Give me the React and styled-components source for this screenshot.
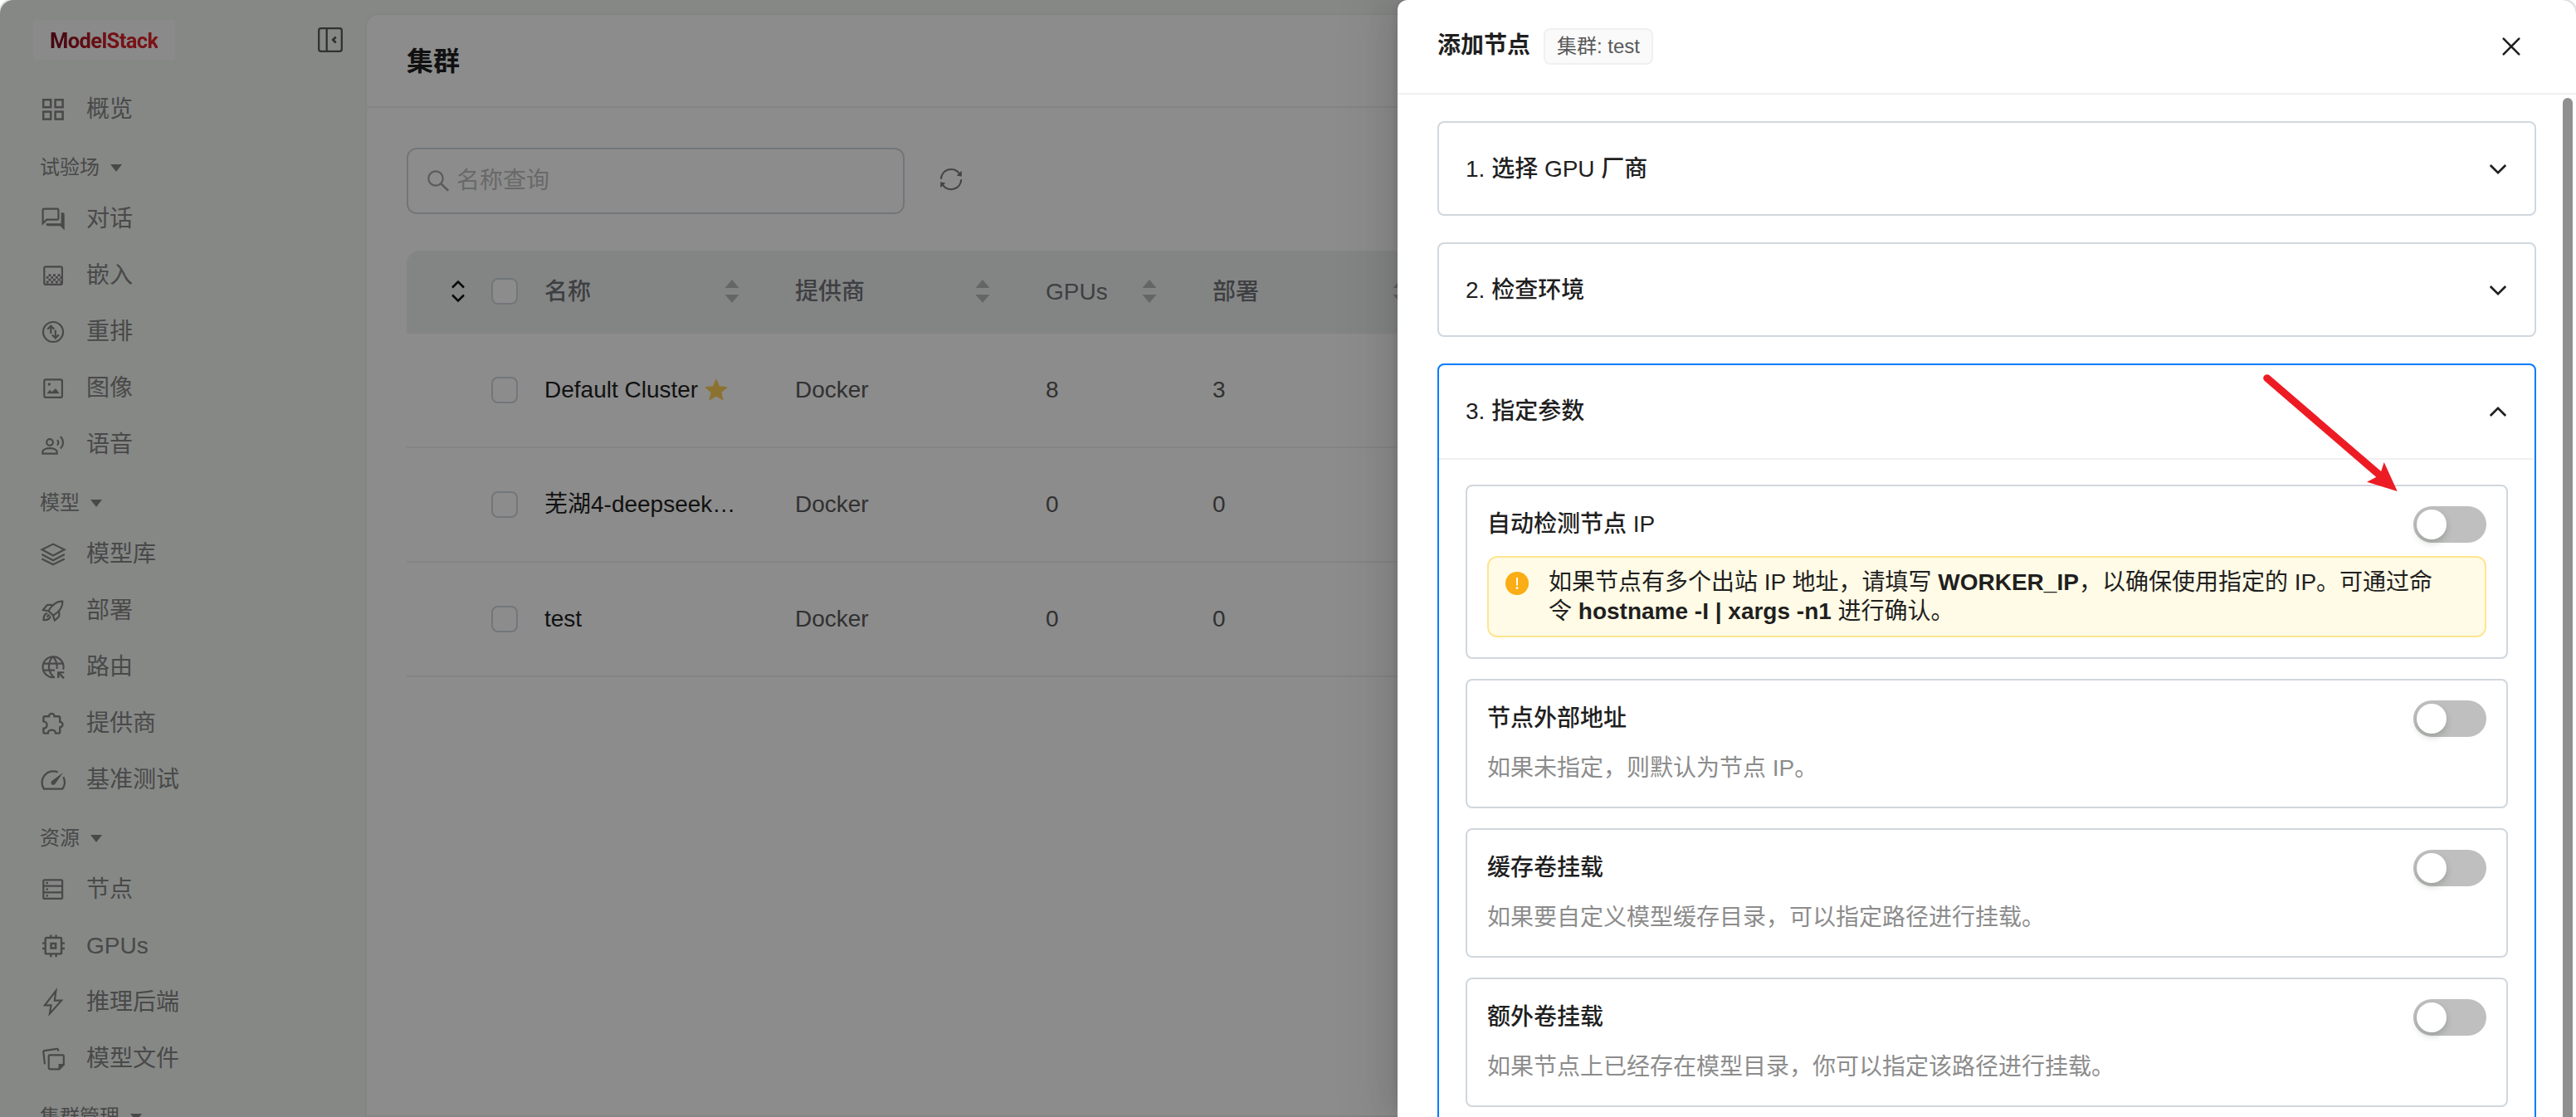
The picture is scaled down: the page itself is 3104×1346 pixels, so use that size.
import styled, { createGlobalStyle } from 'styled-components';
import React from 'react';

const ICONS = {
    overview: (
        <>
            <rect x="3.2" y="3.2" width="9" height="9" strokeWidth="2.5" />
            <rect x="17.6" y="3.2" width="9" height="9" strokeWidth="2.5" />
            <rect x="3.2" y="17.6" width="9" height="9" strokeWidth="2.5" />
            <rect x="17.6" y="17.6" width="9" height="9" strokeWidth="2.5" />
        </>
    ),
    chat: (
        <>
            <path d="M2.6 20.2V4.2q0-1.6 1.6-1.6H19.8q1.6 0 1.6 1.6V14q0 1.6-1.6 1.6H7.2z" />
            <path d="M24.6 7.2H27q1.7 0 1.7 1.7v19.6l-5.2-5.2H8.3q-1.8 0-1.8-3H24.6z" fill="currentColor" stroke="none" />
        </>
    ),
    embedding: (
        <>
            <rect x="4.3" y="4.3" width="21.6" height="21.6" rx="2" />
            <path
                d="M9.5 13.2h3v2.8h-3zM15 13.2h3v2.8h-3zM20.5 13.2h3v2.8h-3zM6.8 16h2.8v2.8h-2.8zM12.4 16h2.8v2.8h-2.8zM17.9 16h2.8v2.8h-2.8zM23.3 16h1.8v2.8h-1.8zM9.5 18.8h3v2.8h-3zM15 18.8h3v2.8h-3zM20.5 18.8h3v2.8h-3zM6.8 21.6h2.8v2.8h-2.8zM12.4 21.6h2.8v2.8h-2.8zM17.9 21.6h2.8v2.8h-2.8zM23.3 21.6h1.8v2.8h-1.8z"
                fill="currentColor"
                stroke="none"
            />
        </>
    ),
    rerank: (
        <>
            <circle cx="15" cy="15" r="12" />
            <path d="M12.3 17V8M8.2 11.8l4.1-4.2 4 4.2M17.8 12.8v9.4M13.8 18.4l4 4.1 4.1-4.1" />
        </>
    ),
    image: (
        <>
            <rect x="4.3" y="4.3" width="21.6" height="21.6" rx="2" />
            <circle cx="10.3" cy="10" r="1.7" fill="currentColor" stroke="none" />
            <path d="M7.3 21.2l3.8-4.4 2.4 2.4 4.6-4.2 4.6 6.2z" fill="currentColor" stroke="none" />
        </>
    ),
    voice: (
        <>
            <circle cx="11" cy="12" r="3.8" />
            <path d="M2.3 25.7V24c0-3.5 5-4.8 8.7-4.8s8.7 1.3 8.7 4.8v1.7z" />
            <path d="M20 9.2q2.8 3.1 0 6.4M23.9 5q6.4 7.3 0 14.5" />
        </>
    ),
    library: (
        <>
            <path d="M1.6 9.2L15 2.6l13.6 6.6L15 16.4z" />
            <path d="M1.4 15L15 22.2 28.8 15M1.4 20.4L15 27.2l13.8-6.8" />
        </>
    ),
    deploy: (
        <>
            <path d="M26.3 3.6C19.6 3 14.6 6.4 9.3 15l5.9 5.6C23.4 15.4 27 10 26.3 3.6z" />
            <path d="M14.4 7.8H9.2Q8 7.8 7.2 8.8L2.9 14q2.8.9 6.4 1M22.3 15.2v5.2q0 1.3-.9 2.2l-4.5 4q-1.4-2.6-1.7-6" />
            <path d="M8.3 18.2C5 18.6 3.4 21.5 3.5 26.2c4.7.2 7.7-1.4 8.3-4.7M7.6 22.4l3-2.9" />
        </>
    ),
    route: (
        <>
            <path d="M27.2 17.8A12.5 12.5 0 1 0 17 27.1" />
            <path d="M14.7 2.3c-6.6 6-6.6 18.6 1.6 25M14.7 2.3c3.8 3.7 5.4 8.8 5 14.7M3 10.7h23.6M3 18.6h14" />
            <path d="M28 28.3l-6.7-6.8M21.2 28v-6.6h7" strokeWidth="2.4" />
        </>
    ),
    provider: (
        <path d="M3.4 7.8q0-1.6 1.6-1.6h5a3.3 3.3 0 0 1 6.6 0h5q1.6 0 1.6 1.6v5a3.3 3.3 0 0 1 0 6.6V25q0 1.6-1.6 1.6H18a4.6 4 0 0 0-9.2 0H5q-1.6 0-1.6-1.6v-4.2a4.2 4.2 0 0 0 0-8.4z" strokeWidth="2.4" />
    ),
    benchmark: (
        <>
            <path d="M20.6 5.4A13.7 13.7 0 0 0 3.9 25.7h22.2a13.7 13.7 0 0 0 1.2-14.5" strokeWidth="2.3" />
            <path d="M27 6L17.6 19.6a2.8 2.8 0 1 1-4.1-3.7z" fill="currentColor" stroke="none" />
        </>
    ),
    nodes: (
        <>
            <rect x="3.3" y="3.3" width="22.8" height="22.6" rx="1.5" />
            <path d="M3 10.7h23.4M3 18.4h23.4" />
            <path d="M6.5 5.8H9v2.4H6.5zM6.5 13.4H9v2.4H6.5zM6.5 21.2H9v2.4H6.5z" fill="currentColor" stroke="none" />
        </>
    ),
    gpus: (
        <>
            <rect x="5.7" y="5" width="19.3" height="19.4" rx="1.5" strokeWidth="2.4" />
            <rect x="12.6" y="12" width="5.5" height="5.5" strokeWidth="2.6" />
            <path d="M12.3 1.4V5M18.6 1.4V5M12.3 24.4v3.8M18.6 24.4v3.8M2 11.6h3.7M2 18h3.7M25 11.6h4M25 18h4" strokeWidth="2.4" />
        </>
    ),
    backend: <path d="M18.4.8L16.8 12.7h8.2L10.9 28.5l1.6-10.2H4.9z" />,
    files: (
        <>
            <path d="M21.3 5.6l-.3-1.7q-.3-1.2-1.5-1L4.5 5.1q-1.4.2-1.2 1.5L5 21.3" />
            <path d="M11 10.3h15.5q1.3 0 1.3 1.3v10.2l-5.6 5.6H11q-1.3 0-1.3-1.3V11.6q0-1.3 1.3-1.3z" />
            <path d="M21.5 21h7v1.2l-6 6h-1z" fill="currentColor" stroke="none" />
        </>
    )
};

const MENU = [
    { items: [{ icon: 'overview', label: '概览' }] },
    {
        title: '试验场',
        items: [
            { icon: 'chat', label: '对话' },
            { icon: 'embedding', label: '嵌入' },
            { icon: 'rerank', label: '重排' },
            { icon: 'image', label: '图像' },
            { icon: 'voice', label: '语音' }
        ]
    },
    {
        title: '模型',
        items: [
            { icon: 'library', label: '模型库' },
            { icon: 'deploy', label: '部署' },
            { icon: 'route', label: '路由' },
            { icon: 'provider', label: '提供商' },
            { icon: 'benchmark', label: '基准测试' }
        ]
    },
    {
        title: '资源',
        items: [
            { icon: 'nodes', label: '节点' },
            { icon: 'gpus', label: 'GPUs' },
            { icon: 'backend', label: '推理后端' },
            { icon: 'files', label: '模型文件' }
        ]
    },
    { title: '集群管理', items: [] }
];

const COLUMNS = ['名称', '提供商', 'GPUs', '部署'];

const CLUSTERS = [
    { name: 'Default Cluster', provider: 'Docker', gpus: 8, deployments: 3, isDefault: true },
    { name: '芜湖4-deepseek…', provider: 'Docker', gpus: 0, deployments: 0 },
    { name: 'test', provider: 'Docker', gpus: 0, deployments: 0 }
];

const PARAMS = [
    { title: '节点外部地址', desc: '如果未指定，则默认为节点 IP。' },
    { title: '缓存卷挂载', desc: '如果要自定义模型缓存目录，可以指定路径进行挂载。' },
    { title: '额外卷挂载', desc: '如果节点上已经存在模型目录，你可以指定该路径进行挂载。' }
];

const Chevron = ({ up }) => (
    <svg width="24" height="24" viewBox="0 0 24 24" fill="none" stroke="#1f1f1f" strokeWidth="2.7">
        <path d={up ? 'M2.8 17L12 7.8 21.2 17' : 'M2.8 7L12 16.2 21.2 7'} />
    </svg>
);

const Sorter = () => (
    <SorterIcon width="24" height="32" viewBox="0 0 24 32">
        <path d="M3.5 12L12 2l8.5 10zM3.5 20L12 30l8.5-10z" fill="currentColor" />
    </SorterIcon>
);

const Sidebar = () => (
    <SidebarWrapper>
        <SidebarTop>
            <Logo><LogoText>ModelStack</LogoText></Logo>
            <svg width="32" height="32" viewBox="0 0 32 32" fill="none" stroke="#595959" strokeWidth="2.3">
                <rect x="2.2" y="2.2" width="27.6" height="27.6" rx="2.5" />
                <path d="M11.7 2v28" />
                <path d="M22.7 12.5L19.2 16l3.500 3.500" strokeWidth="2.7" />
            </svg>
        </SidebarTop>
        {MENU.map((group, i) => (
            <React.Fragment key={i}>
                {group.title && (
                    <MenuTitle>
                        {group.title}
                        <svg width="14" height="9" viewBox="0 0 14 9"><path d="M0 0h14L7 9z" fill="currentColor" /></svg>
                    </MenuTitle>
                )}
                {group.items.map(item => (
                    <MenuItem key={item.icon}>
                        <svg width="30" height="30" viewBox="0 0 30 30" overflow="visible" fill="none" stroke="currentColor" strokeWidth="2.2">
                            {ICONS[item.icon]}
                        </svg>
                        <span>{item.label}</span>
                    </MenuItem>
                ))}
            </React.Fragment>
        ))}
    </SidebarWrapper>
);

const ClusterPage = () => (
    <Page>
        <PageHeader>集群</PageHeader>
        <PageBody>
            <Toolbar>
                <SearchBox>
                    <svg width="28" height="28" viewBox="0 0 28 28" fill="none" stroke="#a8a8a8" strokeWidth="2.2">
                        <circle cx="11" cy="11" r="8.7" />
                        <path d="M17.2 17.2l9 8.6" strokeWidth="2.6" />
                    </svg>
                    名称查询
                </SearchBox>
                <RefreshIcon width="28" height="28" viewBox="0 0 28 28" fill="none" stroke="currentColor" strokeWidth="2.2">
                    <path d="M1.9 13.8A12.2 12.2 0 0 1 23.8 6.8M26.2 14.2A12.2 12.2 0 0 1 4.2 21.2" />
                    <path d="M26.8 3.7v7l-6-1.3zM1.2 24.3v-7l6 1.3z" fill="currentColor" stroke="none" />
                </RefreshIcon>
            </Toolbar>
            <TableHead>
                <ExpandCell>
                    <svg width="16" height="28" viewBox="0 0 16 28" fill="none" stroke="#111" strokeWidth="2.5">
                        <path d="M1 9.5l7-7 7 7M1 18.5l7 7 7-7" />
                    </svg>
                </ExpandCell>
                <Checkbox />
                {COLUMNS.map(col => (
                    <HeadCell key={col}>
                        <span>{col}</span>
                        <Sorter />
                    </HeadCell>
                ))}
            </TableHead>
            {CLUSTERS.map(row => (
                <TableRow key={row.name}>
                    <ExpandCell />
                    <Checkbox />
                    <Cell $primary>
                        {row.name}
                        {row.isDefault && (
                            <svg width="28" height="28" viewBox="0 0 28 28">
                                <path
                                    d="M14 1.600l3.500 8.400 9 .700-6.900 5.900 2.200 8.900L14 20.700l-7.800 4.800 2.200-8.900L1.500 10.700l9-.7z"
                                    fill="#ffd05a"
                                    stroke="#ffd05a"
                                    strokeWidth="1.4"
                                    strokeLinejoin="round"
                                />
                            </svg>
                        )}
                    </Cell>
                    <Cell>{row.provider}</Cell>
                    <Cell>{row.gpus}</Cell>
                    <Cell>{row.deployments}</Cell>
                </TableRow>
            ))}
        </PageBody>
    </Page>
);

const Param = ({ title, desc, children }) => (
    <ParamCard>
        <ParamHead>
            {title}
            <Switch><Knob /></Switch>
        </ParamHead>
        {desc && <ParamDesc>{desc}</ParamDesc>}
        {children}
    </ParamCard>
);

const AddNodeDrawer = () => (
    <Drawer>
        <DrawerHeader>
            <DrawerTitle>添加节点</DrawerTitle>
            <Tag>集群: test</Tag>
            <CloseButton>
                <svg width="24" height="24" viewBox="0 0 24 24" stroke="#1f1f1f" strokeWidth="2.6" strokeLinecap="round">
                    <path d="M2.700 2.700l18.600 18.600M21.300 2.700l-18.600 18.600" />
                </svg>
            </CloseButton>
        </DrawerHeader>
        <DrawerBody>
            <Steps>
                <Step><StepHead>1. 选择 GPU 厂商<Chevron /></StepHead></Step>
                <Step><StepHead>2. 检查环境<Chevron /></StepHead></Step>
                <Step $active>
                    <StepHead>3. 指定参数<Chevron up /></StepHead>
                    <StepContent>
                        <Param title="自动检测节点 IP">
                            <Alert>
                                <AlertIcon width="28" height="28" viewBox="0 0 28 28">
                                    <circle cx="14" cy="14" r="14" fill="#faad14" />
                                    <path d="M14 7v9.5" stroke="#fff" strokeWidth="1.9" />
                                    <circle cx="14" cy="19.6" r="1.4" fill="#fff" />
                                </AlertIcon>
                                <AlertText>
                                    如果节点有多个出站 IP 地址，请填写 <b>WORKER_IP</b>，以确保使用指定的 IP。可通过命令 <b>hostname -I | xargs -n1</b> 进行确认。
                                </AlertText>
                            </Alert>
                        </Param>
                        {PARAMS.map(param => <Param key={param.title} {...param} />)}
                    </StepContent>
                </Step>
            </Steps>
            <ScrollThumb />
        </DrawerBody>
    </Drawer>
);

export default function App() {
    return (
        <Window>
            <GlobalStyle />
            <Sidebar />
            <ClusterPage />
            <Mask />
            <AddNodeDrawer />
            <Pointer width="170" height="150" viewBox="0 0 170 150">
                <path d="M11.7 15.7L148 133" stroke="#ed1c24" strokeWidth="9" strokeLinecap="round" />
                <path d="M168.7 152L152.7 117l-3.7 11.5-6 6.5-11 5.7z" fill="#ed1c24" />
            </Pointer>
        </Window>
    );
}

const GlobalStyle = createGlobalStyle`
    * {
        box-sizing: border-box;
    }
    body {
        margin: 0;
        background: #fff;
        overflow: hidden;
        font-family: "Liberation Sans", "Noto Sans CJK SC", sans-serif;
        font-size: 28px;
        line-height: 44px;
    }
    svg {
        flex-shrink: 0;
    }
`;

const Window = styled.div`
    position: relative;
    display: flex;
    width: 3104px;
    height: 1346px;
    overflow: hidden;
    border-radius: 16px 16px 0 0;
    background: #f4f7f4;
    box-shadow: 0 0 0 2px #e3e3e3;
`;

const SidebarWrapper = styled.aside`
    width: 440px;
    flex-shrink: 0;
    color: #858585;
`;

const SidebarTop = styled.div`
    display: flex;
    align-items: center;
    justify-content: space-between;
    height: 98px;
    padding: 0 26px 2px 40px;
`;

const Logo = styled.div`
    display: flex;
    align-items: center;
    width: 171px;
    height: 48px;
    padding: 2px 0 0 20px;
    border-radius: 4px;
    background: #fcfcfc;
`;

const LogoText = styled.span`
    font-family: Roboto, sans-serif;
    font-size: 25.5px;
    font-weight: 700;
    line-height: 48px;
    letter-spacing: -0.6px;
    color: transparent;
    background: linear-gradient(90deg, #7a0d22 0%, #cf2127 55%, #e2262c 100%);
    background-clip: text;
`;

const MenuItem = styled.div`
    display: flex;
    align-items: center;
    gap: 25px;
    height: 68px;
    padding-left: 49px;
`;

const MenuTitle = styled.div`
    display: flex;
    align-items: center;
    gap: 13px;
    height: 64px;
    padding: 8px 0 0 48px;
    font-size: 24px;
    white-space: nowrap;
`;

const Page = styled.main`
    flex: 1;
    margin-top: 16px;
    border: 2px solid #f0f0f0;
    border-radius: 16px 0 0 0;
    background: #fff;
`;

const PageHeader = styled.h1`
    height: 112px;
    margin: 0;
    padding-left: 48px;
    border-bottom: 2px solid #f0f0f0;
    font-size: 32px;
    font-weight: 700;
    line-height: 112px;
    color: #1f1f1f;
`;

const PageBody = styled.div`
    padding: 48px;
`;

const Toolbar = styled.div`
    display: flex;
    align-items: center;
    gap: 42px;
    margin-bottom: 44px;
`;

const SearchBox = styled.div`
    display: flex;
    align-items: center;
    gap: 8px;
    width: 600px;
    height: 80px;
    padding-left: 22px;
    border: 2px solid #d0d7de;
    border-radius: 12px;
    color: #bfbfbf;
`;

const RefreshIcon = styled.svg`
    margin-bottom: 4px;
    color: #7a7a7a;
`;

const TableHead = styled.div`
    display: flex;
    align-items: center;
    height: 100px;
    border-bottom: 2px solid #f0f0f0;
    border-radius: 16px 0 0 0;
    background: #eff2f0;
    color: #72747a;
    font-weight: 500;
`;

const TableRow = styled.div`
    display: flex;
    align-items: center;
    height: 138px;
    border-bottom: 2px solid #f0f0f0;
`;

const ExpandCell = styled.div`
    display: flex;
    width: 102px;
    padding-left: 54px;
`;

const Checkbox = styled.div`
    width: 32px;
    height: 32px;
    border: 2px solid #d0d7de;
    border-radius: 8px;
    background: #fff;
`;

const Cell = styled.div`
    display: flex;
    align-items: center;
    gap: 8px;
    width: 302px;
    padding: 0 32px;
    color: ${props => props.$primary ? '#1f1f1f' : '#595959'};
    white-space: nowrap;
    &:nth-child(5) {
        width: 201px;
    }
`;

const HeadCell = styled(Cell)`
    justify-content: space-between;
    color: inherit;
    span {
        padding-top: 2px;
    }
`;

const SorterIcon = styled.svg`
    color: #b9b9b9;
`;

const Mask = styled.div`
    position: absolute;
    inset: 0;
    background: rgba(0, 0, 0, 0.45);
`;

const Drawer = styled.section`
    position: absolute;
    top: 0;
    right: 0;
    bottom: 0;
    display: flex;
    flex-direction: column;
    width: 1420px;
    border-radius: 12px 0 0 0;
    background: #fff;
    color: #1f1f1f;
    box-shadow: -12px 0 32px 0 rgba(0, 0, 0, 0.08), -6px 0 12px -8px rgba(0, 0, 0, 0.12), -18px 0 56px 16px rgba(0, 0, 0, 0.05);
`;

const DrawerHeader = styled.header`
    display: flex;
    align-items: center;
    height: 114px;
    flex-shrink: 0;
    padding: 0 66px 0 48px;
    border-bottom: 2px solid #f0f0f0;
`;

const DrawerTitle = styled.div`
    margin-right: 16px;
    padding-bottom: 2px;
    font-weight: 700;
`;

const Tag = styled.span`
    height: 44px;
    padding: 0 14px;
    border: 2px solid #f0f0f0;
    border-radius: 8px;
    background: #fafafa;
    color: #595959;
    font-size: 24px;
    line-height: 40px;
`;

const CloseButton = styled.div`
    display: flex;
    margin-left: auto;
`;

const DrawerBody = styled.div`
    display: flex;
    flex: 1;
    overflow: hidden;
`;

const Steps = styled.div`
    display: flex;
    flex-direction: column;
    flex: 1;
    gap: 32px;
    padding: 32px 32px 0 48px;
`;

const Step = styled.div`
    flex-shrink: 0;
    border: 2px solid ${props => props.$active ? '#007bff' : '#d0d7de'};
    border-radius: 8px;
`;

const StepHead = styled.div`
    display: flex;
    align-items: center;
    justify-content: space-between;
    height: 110px;
    padding: 2px 32px 0;
    font-weight: 500;
`;

const StepContent = styled.div`
    display: flex;
    flex-direction: column;
    gap: 24px;
    margin-top: 2px;
    padding: 30px 32px 48px;
    border-top: 2px solid #f0f0f0;
`;

const ParamCard = styled.div`
    display: flex;
    flex-direction: column;
    gap: 16px;
    padding: 24px;
    border: 2px solid #d0d7de;
    border-radius: 8px;
`;

const ParamHead = styled.div`
    display: flex;
    align-items: center;
    justify-content: space-between;
    height: 44px;
    font-weight: 500;
`;

const ParamDesc = styled.div`
    color: #8c8c8c;
`;

const Switch = styled.div`
    width: 88px;
    height: 44px;
    padding: 4px;
    border-radius: 22px;
    background: #bfbfbf;
`;

const Knob = styled.div`
    width: 36px;
    height: 36px;
    border-radius: 18px;
    background: #fff;
    box-shadow: 0 4px 8px 0 rgba(0, 35, 11, 0.2);
`;

const Alert = styled.div`
    display: flex;
    padding: 12px 40px 12px 20px;
    border: 2px solid #ffe58f;
    border-radius: 12px;
    background: #fffbe6;
`;

const AlertIcon = styled.svg`
    margin: 5px 24px 0 0;
`;

const AlertText = styled.div`
    line-height: 35px;
`;

const ScrollThumb = styled.div`
    width: 12px;
    height: 1300px;
    margin: 4px 4px 0 0;
    border-radius: 6px;
    background: #8f8f8f;
`;

// red arrow laid over the drawer, pointing at the first switch
const Pointer = styled.svg`
    position: absolute;
    left: 2720px;
    top: 440px;
    overflow: visible;
`;
